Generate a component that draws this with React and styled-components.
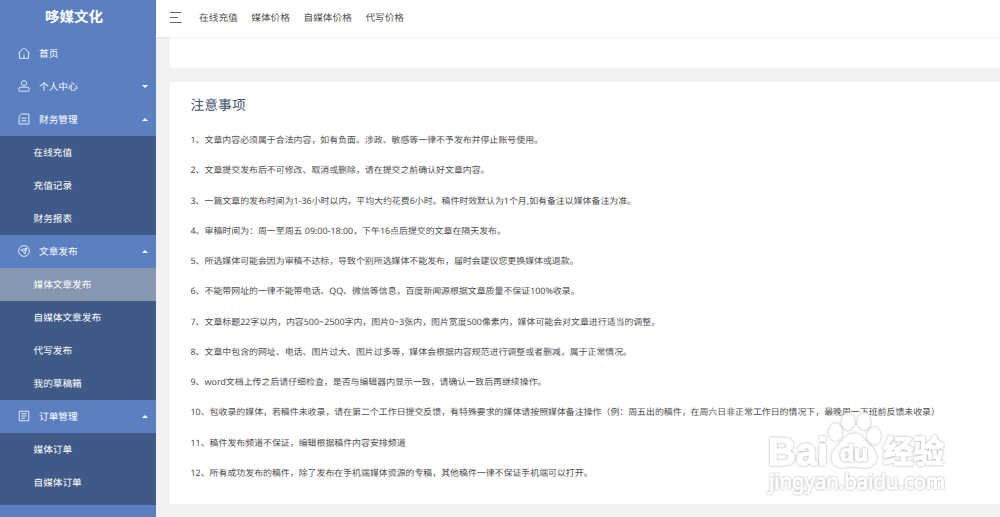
import React from 'react';
import styled, { createGlobalStyle } from 'styled-components';

const COLOR_BLUE = '#5a80c2';
const COLOR_NAVY = '#3f5a87';
const COLOR_ACTIVE = '#8796b1';

const GlobalStyle = createGlobalStyle`
  * {
    box-sizing: border-box;
  }
  body {
    margin: 0;
    overflow: hidden;
    font-family: "Noto Sans", "Noto Sans CJK SC", sans-serif;
    text-rendering: geometricPrecision;
    background: #f1f1f1;
  }
`;

const Page = styled.div`
  display: flex;
  height: 517px;
  overflow: hidden;
`;

const Sidebar = styled.nav`
  width: 156px;
  flex-shrink: 0;
  background: ${COLOR_BLUE};
  color: #fff;
`;

const Logo = styled.div`
  height: 37px;
  padding: 1px 8px 0 0;
  line-height: 32px;
  font-family: "KaiTi", "Noto Sans CJK SC", sans-serif;
  font-size: 14.5px;
  font-weight: 700;
  text-align: center;
`;

const MenuTitle = styled.div`
  display: flex;
  align-items: center;
  height: 33px;
  padding: 0 8px 1.5px 18px;
  font-size: 9.67px;
  svg {
    width: 12px;
    height: 12px;
    margin-right: 9px;
    fill: none;
    stroke: #e3eaf6;
    stroke-width: 1;
  }
`;

const Arrow = styled.span`
  margin-left: auto;
  border: 3px solid transparent;
  border-top-color: ${props => props.$up ? 'transparent' : '#fff'};
  border-bottom-color: ${props => props.$up ? '#fff' : 'transparent'};
  margin-top: ${props => props.$up ? '-2px' : '4px'};
`;

const SubMenu = styled.div`
  padding-bottom: ${props => props.$last ? '6px' : 0};
  background: ${COLOR_NAVY};
`;

const SubItem = styled.div`
  height: 33px;
  padding-left: 33.5px;
  font-size: 9.67px;
  line-height: 33px;
  background: ${props => props.$active ? COLOR_ACTIVE : 'transparent'};
`;

const Main = styled.div`
  flex: 1;
  min-width: 0;
`;

const Header = styled.header`
  position: relative;
  display: flex;
  align-items: center;
  gap: 13.6px;
  height: 37px;
  padding: 0 0 3px 14px;
  background: #fff;
  box-shadow: 0 1px 2px rgba(0, 0, 0, .07);
  font-size: 9.67px;
  color: #505050;
  white-space: nowrap;
`;

const MenuButton = styled.svg`
  width: 12px;
  height: 12px;
  margin-right: 3.5px;
  fill: none;
  stroke: #666;
`;

const Content = styled.main`
  padding-left: 14px;
`;

const EmptyCard = styled.div`
  height: 31px;
  margin-bottom: 14px;
  background: #fff;
`;

const Card = styled.section`
  position: relative;
  height: 422px;
  padding: 10px 0 0 20.5px;
  background: #fff;
`;

const Title = styled.h2`
  margin: 0 0 5px;
  font-size: 13.8px;
  font-weight: 400;
  line-height: 28px;
  color: #46566b;
`;

const Notice = styled.p`
  margin: 0;
  height: 30.25px;
  font-size: 8.91px;
  line-height: 30.25px;
  color: #505050;
  white-space: nowrap;
`;

const Watermark = styled.svg`
  position: absolute;
  left: 590px;
  top: 323px;
  width: 200px;
  height: 98px;
  fill: #fff;
  stroke: #fff;
  stroke-width: 1.4;
  stroke-linejoin: round;
  filter: drop-shadow(0 0 .8px #a8a8a8);
  font-family: "Liberation Sans", "Noto Sans CJK SC", sans-serif;
  .inner {
    filter: drop-shadow(0 0 .8px #a0a0a0);
  }
  .url {
    font-family: "Noto Sans", sans-serif;
    stroke-width: .9;
  }
`;

const ICONS = {
  home: <path d="M.4 6.3 6 .8l5.6 5.5M1.4 5.4v5.9h9.2V5.4M6 11V7.5" />,
  user: (
    <>
      <circle cx="6" cy="3.2" r="2.6" />
      <rect x=".6" y="7.2" width="10.8" height="4" rx="2" />
    </>
  ),
  finance: <path d="M3.3 1h7.6v10H1.1V3.2L3.3 1M3.4 5.2h5.2M3.4 7.8h5.2" />,
  send: (
    <>
      <circle cx="6" cy="6" r="5.4" />
      <path d="M8.9 3.1 7 9 5.5 6.5 3 5.1ZM8.9 3.1 5.5 6.5" />
    </>
  ),
  order: <path d="M1.2 1.2h9.6v9.6H1.2ZM3.3 3.7h5.4M3.3 6h5.4M3.3 8.3H7" />,
};

const MENUS = [
  { icon: 'home', title: '首页' },
  { icon: 'user', title: '个人中心', arrow: 'down' },
  { icon: 'finance', title: '财务管理', arrow: 'up', items: ['在线充值', '充值记录', '财务报表'] },
  { icon: 'send', title: '文章发布', arrow: 'up', items: ['媒体文章发布', '自媒体文章发布', '代写发布', '我的草稿箱'] },
  { icon: 'order', title: '订单管理', arrow: 'up', items: ['媒体订单', '自媒体订单'] },
];

const LINKS = ['在线充值', '媒体价格', '自媒体价格', '代写价格'];

const NOTICES = [
  '1、文章内容必须属于合法内容，如有负面、涉政、敏感等一律不予发布并停止账号使用。',
  '2、文章提交发布后不可修改、取消或删除，请在提交之前确认好文章内容。',
  '3、一篇文章的发布时间为1-36小时以内，平均大约花费6小时。稿件时效默认为1个月,如有备注以媒体备注为准。',
  '4、审稿时间为：周一至周五 09:00-18:00，下午16点后提交的文章在隔天发布。',
  '5、所选媒体可能会因为审稿不达标，导致个别所选媒体不能发布，届时会建议您更换媒体或退款。',
  '6、不能带网址的一律不能带电话、QQ、微信等信息，百度新闻源根据文章质量不保证100%收录。',
  '7、文章标题22字以内，内容500~2500字内，图片0~3张内，图片宽度500像素内，媒体可能会对文章进行适当的调整。',
  '8、文章中包含的网址、电话、图片过大、图片过多等，媒体会根据内容规范进行调整或者删减，属于正常情况。',
  '9、word文档上传之后请仔细检查，是否与编辑器内显示一致，请确认一致后再继续操作。',
  '10、包收录的媒体，若稿件未收录，请在第二个工作日提交反馈，有特殊要求的媒体请按照媒体备注操作（例：周五出的稿件，在周六日非正常工作日的情况下，最晚周一下班前反馈未收录）',
  '11、稿件发布频道不保证，编辑根据稿件内容安排频道',
  '12、所有成功发布的稿件，除了发布在手机端媒体资源的专稿，其他稿件一律不保证手机端可以打开。',
];

function App() {
  return (
    <Page lang="zh-CN">
      <GlobalStyle />
      <Sidebar>
        <Logo>哆媒文化</Logo>
        {MENUS.map(({ icon, title, arrow, items }) => (
          <React.Fragment key={title}>
            <MenuTitle>
              <svg viewBox="0 0 12 12">{ICONS[icon]}</svg>
              {title}
              {arrow ? <Arrow $up={arrow === 'up'} /> : null}
            </MenuTitle>
            {items ? (
              <SubMenu $last={icon === 'order'}>
                {items.map(item => (
                  <SubItem key={item} $active={item === '媒体文章发布'}>{item}</SubItem>
                ))}
              </SubMenu>
            ) : null}
          </React.Fragment>
        ))}
      </Sidebar>
      <Main>
        <Header>
          <MenuButton viewBox="0 0 12 12">
            <path d="M0 1.5h11.5M0 6.5h8M0 11.5h11.5" />
          </MenuButton>
          {LINKS.map(link => <span key={link}>{link}</span>)}
        </Header>
        <Content>
          <EmptyCard />
          <Card>
            <Title>注意事项</Title>
            {NOTICES.map(text => <Notice key={text}>{text}</Notice>)}
            <Watermark viewBox="0 0 200 98">
              <text x="8" y="60" fontSize="39" fontWeight="700" textLength="60" lengthAdjust="spacingAndGlyphs">Bai</text>
              <ellipse cx="75.5" cy="27" rx="6.3" ry="8.3" />
              <ellipse cx="88" cy="16.5" rx="6" ry="8" />
              <ellipse cx="104" cy="16.5" rx="6" ry="8" />
              <ellipse cx="114" cy="31" rx="6.3" ry="8.3" />
              <path d="M94 29c-7 0-9 5-13 9s-9 8-9 14c0 6 4 10 10 10 5 0 7-1 12-1s7 1 12 1c6 0 10-4 10-10 0-6-5-10-9-14s-6-9-13-9Z" />
              <text className="inner" x="80" y="55.5" fontSize="23" fontWeight="700" textLength="28" lengthAdjust="spacingAndGlyphs">du</text>
              <text x="123" y="58" fontSize="32" fontWeight="700" textLength="61" lengthAdjust="spacingAndGlyphs">经验</text>
              <text className="url" x="9" y="84" fontSize="21" textLength="176" lengthAdjust="spacingAndGlyphs">jingyan.baidu.com</text>
            </Watermark>
          </Card>
        </Content>
      </Main>
    </Page>
  );
}

export default App;
